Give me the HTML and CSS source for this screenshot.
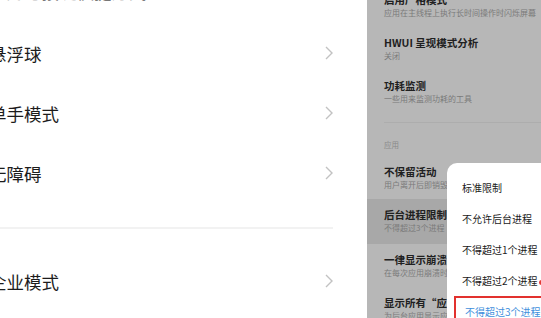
FILE: index.html
```html
<!DOCTYPE html>
<html lang="zh">
<head>
<meta charset="utf-8">
<link rel="stylesheet" href="styles.css">
</head>
<body>
<div class="screen">
  <section class="left">
    <ul class="menu first">
      <li class="item top"><span class="label">手势与按键快捷方式</span><svg class="chev" width="8" height="14" viewBox="0 0 8 14"><path d="M1 1l6 6-6 6"/></svg></li>
      <li class="item"><span class="label">悬浮球</span><svg class="chev" width="8" height="14" viewBox="0 0 8 14"><path d="M1 1l6 6-6 6"/></svg></li>
      <li class="item"><span class="label">单手模式</span><svg class="chev" width="8" height="14" viewBox="0 0 8 14"><path d="M1 1l6 6-6 6"/></svg></li>
      <li class="item"><span class="label">无障碍</span><svg class="chev" width="8" height="14" viewBox="0 0 8 14"><path d="M1 1l6 6-6 6"/></svg></li>
    </ul>
    <div class="sep"></div>
    <ul class="menu second">
      <li class="item"><span class="label">企业模式</span><svg class="chev" width="8" height="14" viewBox="0 0 8 14"><path d="M1 1l6 6-6 6"/></svg></li>
    </ul>
  </section>
  <section class="right">
    <div class="dev-list">
      <div class="row"><div class="t">启用严格模式</div><div class="s">应用在主线程上执行长时间操作时闪烁屏幕</div></div>
      <div class="row"><div class="t">HWUI 呈现模式分析</div><div class="s">关闭</div></div>
      <div class="row"><div class="t">功耗监测</div><div class="s">一些用来监测功耗的工具</div></div>
      <div class="divider"></div>
      <div class="header">应用</div>
      <div class="row"><div class="t">不保留活动</div><div class="s">用户离开后即销毁每个活动</div></div>
      <div class="row tall hl"><div class="t">后台进程限制</div><div class="s">不得超过3个进程</div></div>
      <div class="row"><div class="t">一律显示崩溃对话框</div><div class="s">在每次应用崩溃时显示对话框</div></div>
      <div class="row"><div class="t">显示所有“应用无响应”</div><div class="s">为后台应用显示应用无响应对话框</div></div>
    </div>
    <div class="popup">
      <div class="opt">标准限制</div>
      <div class="opt">不允许后台进程</div>
      <div class="opt">不得超过1个进程</div>
      <div class="opt">不得超过2个进程<span class="dot"></span></div>
      <div class="opt sel">不得超过3个进程</div>
    </div>
  </section>
</div>
</body>
</html>
```

FILE: styles.css
```css
* { box-sizing: border-box; }
html, body {
  margin: 0;
  padding: 0;
  width: 541px;
  height: 318px;
  overflow: hidden;
  background: #fff;
  font-family: "Noto Sans CJK SC", "Noto Sans", sans-serif;
}
.screen {
  display: flex;
  width: 541px;
  height: 318px;
  overflow: hidden;
}
.left {
  width: 367px;
  flex: none;
  background: #fff;
  overflow: hidden;
}
.menu {
  list-style: none;
  margin: 0 0 0 -11px;
  padding: 0;
}
.menu.first { margin-top: -41px; }
.menu.second { margin-top: 22px; }
.item {
  height: 60px;
  display: flex;
  align-items: center;
  justify-content: space-between;
  padding-right: 34px;
  font-size: 17.5px;
  color: #1c1c1c;
}
.item.top { height: 64px; color: #777; }
.label { white-space: nowrap; }
.chev path {
  fill: none;
  stroke: #c2c2c2;
  stroke-width: 1.4;
}
.sep {
  margin-top: 24px;
  margin-right: 34px;
  height: 2px;
  background: #f2f2f2;
}
.right {
  flex: 1;
  position: relative;
  background: #b7b7b7;
  overflow: hidden;
}
.dev-list {
  margin-top: -16px;
}
.row {
  height: 43px;
  padding: 10px 0 0 17px;
  white-space: nowrap;
}
.row.tall { height: 45px; }
.row.hl { background: #a8a8a8; }
.t {
  font-size: 10.5px;
  line-height: 12px;
  font-weight: 700;
  color: #202020;
}
.s {
  font-size: 8px;
  line-height: 14px;
  color: #7a7a7a;
}
.divider {
  height: 10px;
  margin-left: 17px;
  border-bottom: 1px solid #adadad;
}
.header {
  height: 33px;
  padding: 16px 0 0 17px;
  font-size: 7.5px;
  line-height: 12px;
  color: #8a8a8a;
}
.popup {
  position: absolute;
  left: 80px;
  top: 163px;
  right: -30px;
  bottom: -30px;
  background: #fff;
  border-radius: 10px;
  padding-top: 9px;
}
.opt {
  height: 31px;
  line-height: 31px;
  padding-left: 15px;
  font-size: 10px;
  color: #1a1a1a;
  white-space: nowrap;
}
.dot {
  display: inline-block;
  width: 5px;
  height: 5px;
  margin-left: 1px;
  border-radius: 50%;
  background: #e53935;
  vertical-align: middle;
}
.opt.sel {
  margin-left: 7px;
  padding-left: 9px;
  border: 2px solid #e2312e;
  line-height: 27px;
  color: #3f8fdc;
}
```
